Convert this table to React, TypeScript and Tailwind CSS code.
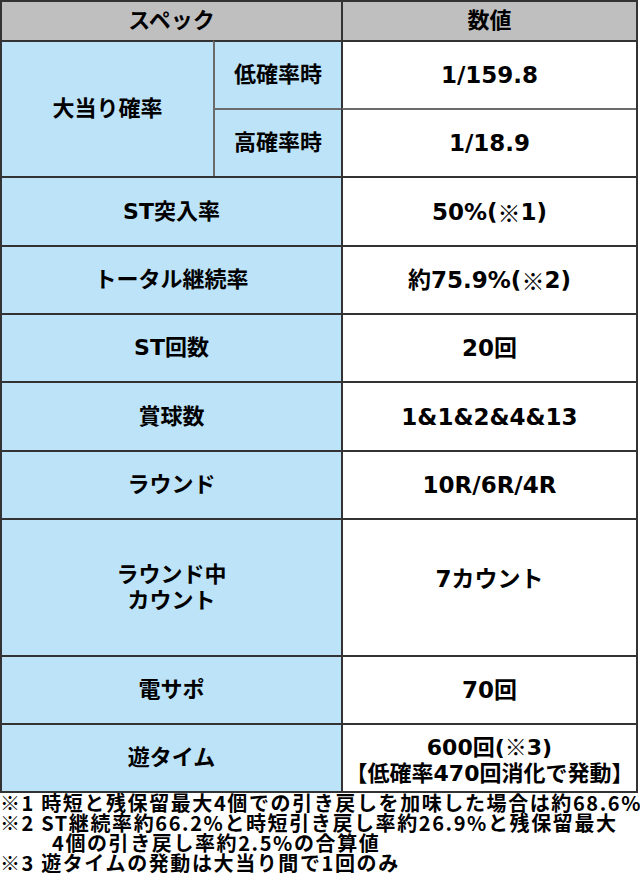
import React from 'react';

const dark = 'border-[#333333]';
const cellBase = 'flex items-center justify-center text-center border-t-2 border-l-2';
const label = `${cellBase} ${dark} bg-[#bde3f8]`;
const value = `${cellBase} ${dark} bg-white text-[23px]`;

const Mark = ({ children }: { children: React.ReactNode }) => (
    <span className="font-['Noto_Sans_CJK_JP'] font-normal">{children}</span>
);

const rows: { name: React.ReactNode; val: React.ReactNode }[] = [
    { name: 'ST突入率', val: <>50%(<Mark>※</Mark>1)</> },
    { name: 'トータル継続率', val: <>約75.9%(<Mark>※</Mark>2)</> },
    { name: 'ST回数', val: '20回' },
    { name: '賞球数', val: '1&1&2&4&13' },
    { name: 'ラウンド', val: '10R/6R/4R' },
];

const App = () => {
    return (
        <div className="w-[640px] h-[874px] bg-white text-black overflow-hidden">
            <div
                className="grid w-[638px] grid-cols-[213px_128px_295px] grid-rows-[40px_68px_68px_69px_68px_68px_69px_68px_137px_68px_68px] border-r-2 border-b-2 border-[#333333] font-['DejaVu_Sans','Noto_Sans_CJK_JP',sans-serif] text-[22px] font-bold leading-[26px]"
            >
                {/* header */}
                <div className={`${cellBase} ${dark} col-span-2 bg-[#bfbfbf]`}>スペック</div>
                <div className={`${cellBase} ${dark} bg-[#bfbfbf]`}>数値</div>

                {/* 大当り確率 */}
                <div className={`${label} row-span-2`}>大当り確率</div>
                <div className={`${cellBase} border-l-[#6b6b6b] border-t-[#333333] bg-[#bde3f8]`}>低確率時</div>
                <div className={value}>1/159.8</div>
                <div className={`${cellBase} border-[#6b6b6b] bg-[#bde3f8]`}>高確率時</div>
                <div className={`${cellBase} border-t-[#6b6b6b] border-l-[#333333] bg-white text-[23px]`}>1/18.9</div>

                {rows.map((r, i) => (
                    <React.Fragment key={i}>
                        <div className={`${label} col-span-2`}>{r.name}</div>
                        <div className={value}>{r.val}</div>
                    </React.Fragment>
                ))}

                <div className={`${label} col-span-2`}>
                    <span>
                        ラウンド中
                        <br />
                        カウント
                    </span>
                </div>
                <div className={`${value} pb-[18px]`}>7カウント</div>

                <div className={`${label} col-span-2`}>電サポ</div>
                <div className={value}>70回</div>

                <div className={`${label} col-span-2`}>遊タイム</div>
                <div className={`${cellBase} ${dark} bg-white pt-[2px]`}>
                    <span>
                        600回(<Mark>※</Mark>3)
                        <br />
                        【低確率470回消化で発動】
                    </span>
                </div>
            </div>

            <div className="font-['Noto_Sans_CJK_JP',sans-serif] text-[20px] font-bold leading-[20px] tracking-[1.6px] whitespace-nowrap">
                <p>※1 時短と残保留最大4個での引き戻しを加味した場合は約68.6%</p>
                <p>※2 ST継続率約66.2%と時短引き戻し率約26.9%と残保留最大</p>
                <p className="pl-[52px]">4個の引き戻し率約2.5%の合算値</p>
                <p>※3 遊タイムの発動は大当り間で1回のみ</p>
            </div>
        </div>
    );
};

export default App;
